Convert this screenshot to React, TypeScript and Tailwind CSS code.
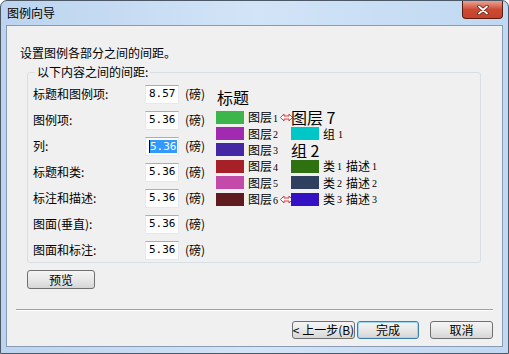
import React from "react";

const rows = [
  { label: "标题和图例项:", value: "8.57" },
  { label: "图例项:", value: "5.36" },
  { label: "列:", value: "5.36", selected: true },
  { label: "标题和类:", value: "5.36" },
  { label: "标注和描述:", value: "5.36" },
  { label: "图面(垂直):", value: "5.36" },
  { label: "图面和标注:", value: "5.36" },
];

const layers = [
  { color: "bg-[#3cb54a]", n: "1", arrow: true },
  { color: "bg-[#a12bb0]", n: "2" },
  { color: "bg-[#4526a3]", n: "3" },
  { color: "bg-[#a62027]", n: "4" },
  { color: "bg-[#c44aa9]", n: "5" },
  { color: "bg-[#5e1c1f]", n: "6", arrow: true },
];

const classes = [
  { color: "bg-[#2f7011]", n: "1" },
  { color: "bg-[#2f405e]", n: "2" },
  { color: "bg-[#3412c4]", n: "3" },
];

const serif = { fontFamily: '"Liberation Serif", serif' };
const mono = { fontFamily: '"DejaVu Sans Mono", monospace', fontSize: 11 };

function Arrow() {
  return (
    <svg width="13" height="9" viewBox="0 0 13 9" className="shrink-0">
      <path
        d="M0.5 4.5 L4 1 L4 3 L9 3 L9 1 L12.5 4.5 L9 8 L9 6 L4 6 L4 8 Z"
        fill="#fff"
        stroke="#e0353a"
        strokeWidth="1"
      />
    </svg>
  );
}

function WinButton({ children, focused, className }: { children: React.ReactNode; focused?: boolean; className?: string }) {
  return (
    <div
      className={`flex items-center justify-center whitespace-nowrap rounded-[3px] border ${
        focused ? "border-[#3c7fb1] shadow-[inset_0_0_0_1px_#9fd5f5]" : "border-[#707070]"
      } bg-gradient-to-b from-[#f4f4f4] via-[#e8e8e8] to-[#d6d6d6] text-[12px] text-black ${className ?? ""}`}
    >
      {children}
    </div>
  );
}

export default function App() {
  return (
    <div
      className="w-[509px] h-[354px] flex flex-col rounded-t-[7px] border border-[#4d5866] bg-gradient-to-r from-[#bcd4ef] via-[#d2e4f7] to-[#c0d8f2] overflow-hidden"
      style={{ fontFamily: '"Noto Sans CJK SC", "Liberation Sans", sans-serif' }}
    >
      {/* title bar */}
      <div className="h-[24px] flex items-start justify-between shrink-0">
        <div className="pl-[6px] pt-[5px] text-[12px] leading-[14px] text-black">图例向导</div>
        <div className="mr-[5px] w-[41px] h-[18px] rounded-b-[4px] border border-t-0 border-[#5a1d14] bg-gradient-to-b from-[#e8a293] via-[#cc4a32] to-[#c8412b] flex items-center justify-center">
          <svg width="12" height="10" viewBox="0 0 12 10">
            <path d="M2 1.5 L10 8.5 M10 1.5 L2 8.5" stroke="#5a2418" strokeWidth="3.4" strokeLinecap="round" />
            <path d="M2 1.5 L10 8.5 M10 1.5 L2 8.5" stroke="#fff" strokeWidth="1.8" strokeLinecap="round" />
          </svg>
        </div>
      </div>

      {/* client area */}
      <div className="flex-1 mx-[5px] mb-[6px] border border-[#8a9cb4] bg-[#f0f0f0] flex flex-col text-[12px] text-black">
        <div className="pl-[13px] pt-[19px] leading-[16px]">设置图例各部分之间的间距。</div>

        <fieldset className="ml-[20px] mr-[21px] mt-[4px] h-[198px] border border-[#d5dfe5] rounded-[3px] px-[5px]">
          <legend className="ml-[2px] px-[2px] leading-[14px]">以下内容之间的间距:</legend>
          <div className="flex pt-[2px]">
            <div className="flex flex-col w-[182px] shrink-0">
              {rows.map((r) => (
                <div key={r.label} className="h-[26px] flex items-center whitespace-nowrap">
                  <span className="w-[112px]">{r.label}</span>
                  <div className="w-[34px] h-[19px] bg-white border border-[#e3e9ef] border-t-[#abadb3] flex items-center pl-[3px]">
                    {r.selected ? (
                      <span className="bg-[#3399ff] text-white leading-[13px] border-l border-black" style={mono}>
                        {r.value}
                      </span>
                    ) : (
                      <span style={mono}>{r.value}</span>
                    )}
                  </div>
                  <span className="ml-[6px]">(磅)</span>
                </div>
              ))}
            </div>

            {/* legend preview */}
            <div className="ml-[1px] flex flex-col pt-[6px] whitespace-nowrap">
              <div className="text-[16px] leading-[21px] pl-[1px]">标题</div>
              <div className="grid grid-cols-[75px_auto] grid-rows-[repeat(6,16.4px)] pt-[1px]">
                {layers.map((l, i) => (
                  <div key={l.n} className="flex items-center" style={{ gridRow: i + 1, gridColumn: 1 }}>
                    <div className={`w-[28px] h-[13px] shrink-0 ${l.color}`} />
                    <span className="ml-[4px] leading-[14px]">图层</span>
                    <span className="text-[10px] ml-[1px] mt-[2px]" style={serif}>
                      {l.n}
                    </span>
                    {l.arrow && (
                      <span className="ml-[2px] flex">
                        <Arrow />
                      </span>
                    )}
                  </div>
                ))}
                <div className="flex items-center text-[16px] leading-[16px]" style={{ gridRow: 1, gridColumn: 2 }}>
                  图层 7
                </div>
                <div className="flex items-center leading-[14px]" style={{ gridRow: 2, gridColumn: 2 }}>
                  <div className="w-[28px] h-[13px] shrink-0 bg-[#00c7c7]" />
                  <span className="ml-[4px]">组</span>
                  <span className="text-[10px] ml-[3px] mt-[2px]" style={serif}>1</span>
                </div>
                <div className="flex items-center text-[16px] leading-[16px]" style={{ gridRow: 3, gridColumn: 2 }}>
                  组 2
                </div>
                {classes.map((c, i) => (
                  <div key={c.n} className="flex items-center leading-[14px]" style={{ gridRow: i + 4, gridColumn: 2 }}>
                    <div className={`w-[28px] h-[13px] shrink-0 ${c.color}`} />
                    <span className="ml-[4px]">类</span>
                    <span className="text-[10px] ml-[2px] mt-[2px]" style={serif}>{c.n}</span>
                    <span className="ml-[4px]">描述</span>
                    <span className="text-[10px] ml-[2px] mt-[2px]" style={serif}>{c.n}</span>
                  </div>
                ))}
              </div>
            </div>
          </div>
        </fieldset>

        <div className="ml-[20px] mt-[7px]">
          <WinButton className="w-[68px] h-[19px]">预览</WinButton>
        </div>

        <div className="mx-[9px] mt-[20px] h-0 border-t border-[#a0a0a0] border-b-white border-b" />

        <div className="flex justify-end pr-[9px] mt-[10px]">
          <WinButton className="w-[63px] h-[18px] text-[11px]">&lt; 上一步(B)</WinButton>
          <WinButton focused className="w-[62px] h-[18px] ml-[2px]">完成</WinButton>
          <WinButton className="w-[63px] h-[18px] ml-[11px]">取消</WinButton>
        </div>
      </div>
    </div>
  );
}
